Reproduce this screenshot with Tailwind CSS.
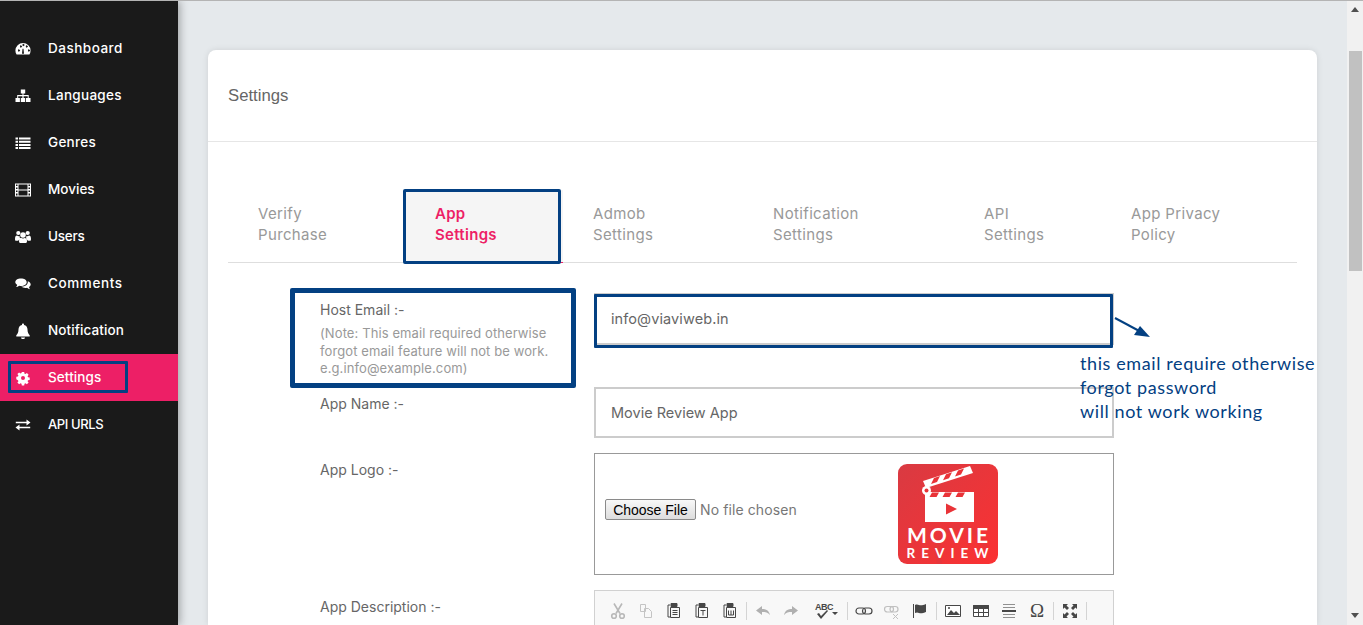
<!DOCTYPE html>
<html>
<head>
<meta charset="utf-8">
<script src="https://cdn.jsdelivr.net/npm/@tailwindcss/browser@4"></script>
</head>
<body class="relative w-[1363px] h-[625px] overflow-hidden border-t border-[#b4b4b4] flex font-['Inter',sans-serif] bg-[#e5e9ec]">

<aside class="relative z-10 w-[178px] shrink-0 h-full bg-[#1a1a1a] pt-[24px] text-white text-[13.500px] font-medium tracking-[0.2px] shadow-[2px_0_8px_rgba(0,0,0,0.3)]">
  <a class="flex items-center h-[47px] pl-[15px] gap-[17px]"><svg class="w-4 h-4" viewBox="0 0 16 16" fill="#fff"><path fill-rule="evenodd" d="M8 2a7.6 7.6 0 0 0-7.6 7.6c0 1.5.4 2.9 1.2 4h12.800a7.600 7.600 0 0 0 1.200-4A7.600 7.600 0 0 0 8 2zM3 9.500a1 1 0 1 1 0 .01zM5 5.500a1 1 0 1 1 0 .01zM10.800 5.500a1 1 0 1 1 0 .01zM13 9.500a1 1 0 1 1 0 .01zM7.500 4a1 1 0 1 1 0 .01zM7 12.800l.5-5h1l.500 5z"/></svg><span class="tracking-[0.5px]">Dashboard</span></a>
  <a class="flex items-center h-[47px] pl-[15px] gap-[17px]"><svg class="w-4 h-4" viewBox="0 0 16 16" fill="#fff"><path d="M5.800 1.500h4.400v4H8.500V7h5.200v3h1.800v4h-4.500v-4h1.700V8.300H8.600V10h1.600v4H5.800v-4h1.600V8.300H3.200V10h1.700v4H.5v-4h1.700V7h5.300V5.500H5.800z"/></svg><span class="tracking-[0.3px]">Languages</span></a>
  <a class="flex items-center h-[47px] pl-[15px] gap-[17px]"><svg class="w-4 h-4" viewBox="0 0 16 16" fill="#fff"><path d="M.5 2.500h2.500v2H.5zM4 2.500h11.500v2H4zM.5 5.700h2.500v2H.5zM4 5.700h11.500v2H4zM.5 8.900h2.500v2H.5zM4 8.900h11.500v2H4zM.5 12h2.500v2H.5zM4 12h11.500v2H4z"/></svg><span class="tracking-[0.3px]">Genres</span></a>
  <a class="flex items-center h-[47px] pl-[15px] gap-[17px]"><svg class="w-4 h-4" viewBox="0 0 16 16" fill="#fff"><path fill-rule="evenodd" d="M0 1.500h16v13H0zM1 2.500v1.500h1.500V2.500zM13.500 2.500v1.500H15V2.500zM1 5.500V7h1.500V5.500zM13.500 5.500V7H15V5.500zM1 8.500V10h1.500V8.500zM13.500 8.500V10H15V8.500zM1 11.500v2h1.500v-2zM13.500 11.500v2H15v-2zM3.500 2.500v5h9v-5zM3.500 8.500v5h9v-5z"/></svg><span class="tracking-[0px]">Movies</span></a>
  <a class="flex items-center h-[47px] pl-[15px] gap-[17px]"><svg class="w-4 h-4" viewBox="0 0 16 16" fill="#fff"><circle cx="3.300" cy="4" r="2.100"/><circle cx="12.700" cy="4" r="2.100"/><circle cx="8" cy="6" r="2.800"/><path d="M0 10c0-2.500.8-3.500 2-3.500.9.700 1.900.8 2.600.5-.2 1.200.3 2 1 2.800-1 .4-1.900 1-2.400 2H1c-.6 0-1-.4-1-1.800zM16 10c0-2.500-.8-3.500-2-3.500-.9.700-1.900.8-2.600.5.200 1.200-.3 2-1 2.800 1 .4 1.900 1 2.400 2h2.200c.6 0 1-.4 1-1.800zM4 12c0-2 1-3 2-3.200 1.200 1 2.800 1 4 0 1 .2 2 1.200 2 3.200 0 1.500-.6 2-1.500 2h-5C4.600 14 4 13.500 4 12z"/></svg><span class="tracking-[-0.2px]">Users</span></a>
  <a class="flex items-center h-[47px] pl-[15px] gap-[17px]"><svg class="w-4 h-4" viewBox="0 0 16 16" fill="#fff"><path d="M6 2.500c3.300 0 5.700 1.600 5.700 3.700S9.300 9.900 6 9.900c-.7 0-1.300-.1-1.800-.2C3.200 10.500 2 11 1 11.100c.7-.7 1.100-1.500 1.200-2.400C1 8 .3 7.200.3 6.200.3 4.100 2.700 2.500 6 2.500z"/><path d="M12.800 5.200c1.700.6 2.900 1.800 2.900 3.200 0 1-.6 1.800-1.700 2.500.1.900.5 1.600 1.100 2.300-1-.1-2.200-.6-3.100-1.400-.5.100-1 .2-1.600.2-1.700 0-3.200-.5-4.200-1.400 3.900.1 7-2 6.600-5.400z"/></svg><span class="tracking-[0.6px]">Comments</span></a>
  <a class="flex items-center h-[47px] pl-[15px] gap-[17px]"><svg class="w-4 h-4" viewBox="0 0 16 16" fill="#fff"><path d="M8 .5c.6 0 1 .4 1 1v.500c2.200.5 3.500 2.200 3.500 4.500 0 3.200 1 4.500 2.200 5.800V13.500H1.300v-1.200C2.500 11 3.500 9.700 3.500 6.500 3.500 4.200 4.800 2.500 7 2V1.500c0-.6.4-1 1-1zM6 14.500h4c0 1-.9 1.500-2 1.500s-2-.5-2-1.500z"/></svg><span class="tracking-[0.1px]">Notification</span></a>
  <a class="flex items-center h-[47px] pl-[15px] gap-[17px] bg-[#ed1f66]"><svg class="w-4 h-4" viewBox="0 0 16 16" fill="#fff"><path fill-rule="evenodd" d="M6.800 2h2.400l.3 1.700 1 .4 1.400-1 1.700 1.700-1 1.400.4 1 1.700.3v2.400l-1.700.3-.4 1 1 1.400-1.700 1.700-1.400-1-1 .4-.3 1.700H6.800l-.3-1.700-1-.4-1.400 1-1.700-1.700 1-1.400-.4-1L1.300 9.200V6.800L3 6.500l.4-1-1-1.400 1.700-1.700 1.400 1 1-.4zM8 6a2 2 0 1 0 0 4 2 2 0 0 0 0-4z"/></svg><span class="tracking-[0.1px]">Settings</span></a>
  <a class="flex items-center h-[47px] pl-[15px] gap-[17px]"><svg class="w-4 h-4" viewBox="0 0 16 16" fill="#fff"><path d="M.8 4.700h10.700V2.600L15.500 5.500l-4 3V6.300H.8zM15.200 9.700H4.500V7.600L.5 10.500l4 3v-2.200h10.700z"/></svg><span class="text-[13px] tracking-[-0.4px]">API URLS</span></a>
</aside>

<main class="w-[1169px] shrink-0 h-full pl-[30px] pr-[30px] pt-[49px]">
  <section class="bg-white rounded-t-lg shadow-[0_0_6px_rgba(0,0,0,0.1)] h-[575px] overflow-hidden">
    <header class="h-[92px] flex items-center px-5 border-b border-[#e6e6e6] text-[16.700px] text-[#666] font-['Liberation_Sans',sans-serif]">Settings</header>
    <div class="px-5 pt-[48px]">
      <nav class="flex h-[73px] border-b border-[#dedede] text-[15px] leading-[21px] font-normal tracking-[0.35px] text-[#999]">
        <a class="w-[177px] pl-[30px] pt-[13px]">Verify<br>Purchase</a>
        <a class="w-[158px] pl-[30px] pt-[13px] -mb-px bg-[#f5f5f5] border-b border-[#ed1f66] text-[#ed1f66] font-semibold tracking-[0.3px]">App<br>Settings</a>
        <a class="w-[180px] pl-[30px] pt-[13px]">Admob<br>Settings</a>
        <a class="w-[211px] pl-[30px] pt-[13px]">Notification<br>Settings</a>
        <a class="w-[147px] pl-[30px] pt-[13px]">API<br>Settings</a>
        <a class="w-[195px] pl-[30px] pt-[13px]">App Privacy<br>Policy</a>
      </nav>

      <form class="pt-[32px] text-[#666]">
        <div class="flex h-[92px]">
          <div class="w-[366px] pl-[92px] pt-[4px]">
            <p class="text-[14px] leading-[21px]">Host Email :-</p>
            <p class="w-[240px] mt-[5px] text-[13px] leading-[17.500px] tracking-[0.1px] text-[#999]">(Note: This email required otherwise<br>forgot email feature will not be work.<br>e.g.info@example.com)</p>
          </div>
          <input class="-mt-[2px] w-[520px] h-[52px] border-2 border-[#ccc] pl-[15px] pb-[2px] text-[14.500px] tracking-[0.1px] text-[#666] outline-none" value="info@viaviweb.in">
        </div>
        <div class="flex h-[66px]">
          <label class="w-[366px] pl-[92px] pt-[6px] text-[14px] leading-[21px]">App Name :-</label>
          <input class="w-[520px] h-[51px] border-2 border-[#ccc] pl-[15px] pb-[1px] text-[14.500px] text-[#666] outline-none" value="Movie Review App">
        </div>
        <div class="flex h-[137px]">
          <label class="w-[366px] pl-[92px] pt-[6px] text-[14px] leading-[21px]">App Logo :-</label>
          <div class="w-[520px] h-[122px] border border-[#999] pl-[10px] flex items-center">
            <input type="file" class="-mt-[9px] w-[293px] text-[14px] tracking-[0.1px] text-[#777] file:h-[21px] file:w-[91px] file:mr-[4px] file:font-['Liberation_Sans',sans-serif] file:text-[14px] file:tracking-normal file:text-black file:border file:border-[#8a8a8a] file:rounded-[2px] file:bg-linear-to-b file:from-[#f8f8f8] file:to-[#dddddd]">
            <svg class="w-[100px] h-[100px]" viewBox="0 0 100 100">
              <defs><linearGradient id="lg" x1="0" y1="0" x2="1" y2="1"><stop offset="0" stop-color="#d93a42"/><stop offset="1" stop-color="#fb3132"/></linearGradient></defs>
              <rect width="100" height="100" rx="9" fill="url(#lg)"/>
              <path d="M42 100c-6-14-3-30 12-36s28 6 34 20" fill="none" stroke="#e0383d" stroke-width="5" opacity="0.6"/>
              <path d="M27 28h49v30H27z" fill="#fff"/>
              <path d="M34 28.500h7l-2.500 4.500h-7zM47 28.500h7l-2.500 4.500h-7zM60 28.500h7l-2.500 4.500h-7z" fill="#e93338"/>
              <path d="M25 17L72 2l3 7-47 15z" fill="#fff"/>
              <path d="M36 14l6-2-3 6-6 2zM48 10.200l6-2-3 6-6 2zM60 6.400l6-2-3 6-6 2z" fill="#e93338"/>
              <circle cx="28.500" cy="26.500" r="4.500" fill="#fff"/><circle cx="28.500" cy="26.500" r="2" fill="#e93338"/>
              <path d="M48 39.500l11 5.500-11 5.500z" fill="#e93338"/>
              <text x="51" y="79" text-anchor="middle" font-family="Lato,sans-serif" font-weight="700" font-size="21" letter-spacing="3" fill="#fff">MOVIE</text>
              <text x="52.500" y="94" text-anchor="middle" font-family="Lato,sans-serif" font-weight="700" font-size="13.500" letter-spacing="6" fill="#fff">REVIEW</text>
            </svg>
          </div>
        </div>
        <div class="flex">
          <label class="w-[366px] pl-[92px] pt-[6px] text-[14px] leading-[21px]">App Description :-</label>
          <div class="w-[520px] h-[60px] border border-[#d1d1d1] bg-[#f8f8f8] pl-[14px] pt-[11px] flex items-start">
            <div class="flex items-center h-[18px] text-[#474747]">
              <svg class="w-[18px] h-[18px] mr-[10px]" viewBox="0 0 18 18" fill="none" stroke="#b8b8b8" stroke-width="1.600"><path d="M5 1.500l6 10M13 1.500l-6 10"/><circle cx="5" cy="14" r="2.300"/><circle cx="13" cy="14" r="2.300"/></svg>
              <svg class="w-[18px] h-[18px] mr-[10px]" viewBox="0 0 18 18" fill="none" stroke="#c4c4c4"><path d="M3.500 2.500h5v7h-5zM7.500 6.500h4l3 3v6h-7z"/></svg>
              <svg class="w-[18px] h-[18px] mr-[10px]" viewBox="0 0 18 18" fill="none" stroke="#474747"><path d="M5 3H3v12h2"/><path d="M5.500 5.500h9v10h-9z"/><path d="M7.500 8.500h5M7.500 10.500h5M7.500 12.500h5"/><path d="M6 1.500h6v3H6z" fill="#474747"/></svg>
              <svg class="w-[18px] h-[18px] mr-[10px]" viewBox="0 0 18 18" fill="none" stroke="#474747"><path d="M5 3H3v12h2"/><path d="M5.500 5.500h9v10h-9z"/><path d="M7.500 8.500h5M10 8.500v5"/><path d="M6 1.500h6v3H6z" fill="#474747"/></svg>
              <svg class="w-[18px] h-[18px] mr-[7px]" viewBox="0 0 18 18" fill="none" stroke="#474747"><path d="M5 3H3v12h2"/><path d="M5.500 5.500h9v10h-9z"/><path d="M7.500 8.500v4.500h5V8.500M10 8.500v4.500"/><path d="M6 1.500h6v3H6z" fill="#474747"/></svg>
              <i class="block w-px h-[18px] bg-[#d4d4d4] mr-[7px]"></i>
              <svg class="w-[18px] h-[18px] mr-[10px]" viewBox="0 0 18 18" fill="#b0b0b0"><path d="M8 4v3c4 0 7 1.500 8 6-2-2.500-4.500-3-8-3v3L2 8.500z"/></svg>
              <svg class="w-[18px] h-[18px] mr-[10px]" viewBox="0 0 18 18" fill="#b0b0b0"><path d="M10 4v3c-4 0-7 1.500-8 6 2-2.500 4.500-3 8-3v3l6-4.500z"/></svg>
              <span class="block w-[26px] ml-[5px] h-[18px] mr-[6px] relative font-['Liberation_Sans',sans-serif] text-[9px] leading-[11px] tracking-[-0.5px] font-bold">ABC<svg class="absolute left-[1px] top-[6px] w-[22px] h-[12px]" viewBox="0 0 22 12" fill="#474747"><path d="M1 6l2-1 2 3 6-6 1 1-7 8zM16 4h6l-3 3z"/></svg></span>
              <i class="block w-px h-[18px] bg-[#d4d4d4] mr-[7px]"></i>
              <svg class="w-[18px] h-[18px] mr-[10px]" viewBox="0 0 18 18" fill="none" stroke="#474747" stroke-width="1.200"><rect x="1" y="6" width="9.500" height="6" rx="3"/><rect x="7.500" y="6" width="9.500" height="6" rx="3"/></svg>
              <svg class="w-[18px] h-[18px] mr-[10px]" viewBox="0 0 18 18" fill="none" stroke="#c0c0c0" stroke-width="1.200"><rect x="1.500" y="4.500" width="9" height="5.500" rx="2.700"/><rect x="7" y="4.500" width="8" height="5.500" rx="2.700"/><path d="M10 12l5 5M15 12l-5 5" stroke-width="1"/></svg>
              <svg class="w-[18px] h-[18px] mr-[7px]" viewBox="0 0 18 18" fill="#474747"><path d="M2 2h1v14H2zM4 3c3-1.500 4 .8 7 .2 1.500-.3 3-.7 4-1.200v8c-1 .5-2.500 1-4 1.200-3 .5-4-1.800-7-.2z"/></svg>
              <i class="block w-px h-[18px] bg-[#d4d4d4] mr-[7px]"></i>
              <svg class="w-[18px] h-[18px] mr-[10px]" viewBox="0 0 18 18"><path d="M1.500 3.500h15v11h-15z" fill="#fff" stroke="#474747"/><path d="M3 13l4-5 3 3 2-2 4 4z" fill="#474747"/><circle cx="5" cy="6" r="1" fill="#474747"/></svg>
              <svg class="w-[18px] h-[18px] mr-[10px]" viewBox="0 0 18 18" fill="#fff" stroke="#474747"><path d="M1.500 3.500h15v11h-15z"/><path d="M1.500 3.500h15v3h-15z" fill="#474747"/><path d="M6.500 7v7.500M11.500 7v7.500M1.500 10.500h15"/></svg>
              <svg class="w-[18px] h-[18px] mr-[10px]" viewBox="0 0 18 18" stroke="#909090"><path d="M3 2.500h12M3 5.500h12M3 12.500h12M3 15.500h12"/><path d="M2 9h14" stroke="#474747" stroke-width="2"/></svg>
              <span class="block w-[18px] h-[18px] mr-[7px] font-['Liberation_Serif',serif] text-[19px] leading-[18px] text-center">Ω</span>
              <i class="block w-px h-[18px] bg-[#d4d4d4] mr-[7px]"></i>
              <svg class="w-[18px] h-[18px] mr-[7px]" viewBox="0 0 18 18" fill="#474747"><path d="M2 2h5L5.500 3.500 8 6 6 8 3.500 5.500 2 7zM16 2v5l-1.500-1.500L12 8l-2-2 2.500-2.500L11 2zM2 16v-5l1.500 1.500L6 10l2 2-2.500 2.500L7 16zM16 16h-5l1.500-1.500L10 12l2-2 2.500 2.500L16 11z"/></svg>
              <i class="block w-px h-[18px] bg-[#d4d4d4]"></i>
            </div>
          </div>
        </div>
      </form>
    </div>
  </section>
</main>

<div class="relative w-[16px] shrink-0 h-full bg-[#f1f1f1]">
  <div class="absolute left-[2px] top-[50px] w-[13px] h-[220px] bg-[#c1c1c1]"></div>
  <svg class="absolute left-[3px] top-[6px] w-[10px] h-[6px]" viewBox="0 0 10 6" fill="#505050"><path d="M5 0l4 5H1z"/></svg>
  <svg class="absolute left-[3px] top-[612px] w-[10px] h-[6px]" viewBox="0 0 10 6" fill="#505050"><path d="M5 5L1 0h8z"/></svg>
</div>

<!-- annotations drawn on top of the screenshot -->
<div class="absolute z-20 left-[8px] top-[360px] w-[120px] h-[32px] border-[3px] border-[#034082] rounded-[1px]"></div>
<div class="absolute z-20 left-[403px] top-[188px] w-[158px] h-[75px] border-[3px] border-[#034082] rounded-[2px]"></div>
<div class="absolute z-20 left-[290px] top-[287px] w-[286px] h-[100px] border-[5px] border-[#034082] rounded-[2px]"></div>
<div class="absolute z-20 left-[594px] top-[293px] w-[519px] h-[54px] border-[3px] border-[#034082] rounded-[1px]"></div>
<svg class="absolute z-20 left-[1110px] top-[312px] w-[45px] h-[28px]" viewBox="0 0 45 28"><path d="M5 5l28 15" stroke="#034082" stroke-width="2"/><path d="M40 24l-16-2 6-9z" fill="#034082"/></svg>
<p class="absolute z-20 left-[1080px] top-[350px] w-[250px] font-['Lato',sans-serif] text-[18px] leading-[24px] tracking-[0.6px] text-[#034082]">this email require otherwise<br>forgot password<br>will not work working</p>

</body>
</html>
